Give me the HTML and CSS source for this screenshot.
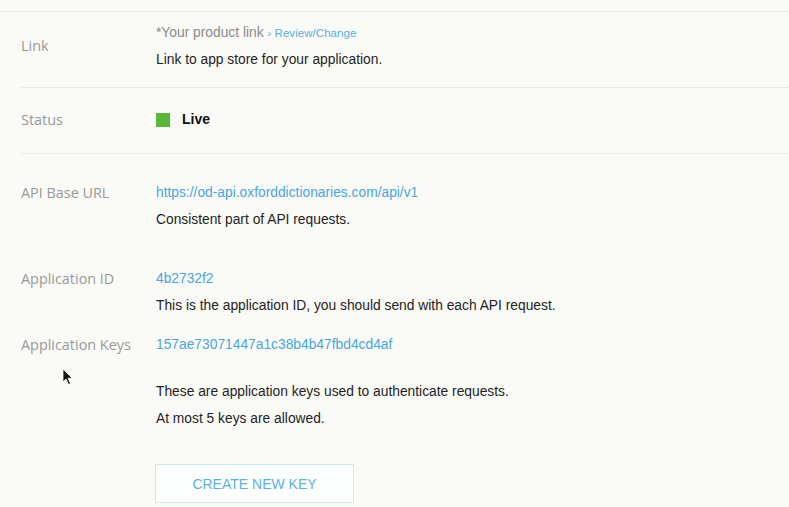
FILE: index.html
```html
<!DOCTYPE html>
<html>
<head>
<meta charset="utf-8">
<link rel="stylesheet" href="styles.css">
</head>
<body>
<div class="topline"></div>
<div class="section">
  <div class="row row-link bordered">
    <div class="label label-link">Link</div>
    <div class="value">
      <p class="muted">*Your product link <span class="review">› Review/Change</span></p>
      <p>Link to app store for your application.</p>
    </div>
  </div>
  <div class="row row-status bordered">
    <div class="label">Status</div>
    <div class="value status"><span class="dot"></span><b>Live</b></div>
  </div>
  <div class="row row-url">
    <div class="label">API Base URL</div>
    <div class="value">
      <p><a class="link">https://od-api.oxforddictionaries.com/api/v1</a></p>
      <p>Consistent part of API requests.</p>
    </div>
  </div>
  <div class="row row-id">
    <div class="label">Application ID</div>
    <div class="value">
      <p><a class="link">4b2732f2</a></p>
      <p>This is the application ID, you should send with each API request.</p>
    </div>
  </div>
  <div class="row row-keys">
    <div class="label">Application Keys</div>
    <div class="value">
      <p><a class="link">157ae73071447a1c38b4b47fbd4cd4af</a></p>
      <p class="gap">These are application keys used to authenticate requests.</p>
      <p>At most 5 keys are allowed.</p>
      <button class="btn">CREATE NEW KEY</button>
    </div>
  </div>
</div>
<svg class="cursor" width="12" height="18" viewBox="0 0 12 18"><path d="M1 1 L1 14 L4 11 L6.5 16.5 L8.5 15.6 L6 10.2 L10.2 10.2 Z" fill="#111" stroke="#fff" stroke-width="0.8"/></svg>
</body>
</html>
```
FILE: styles.css
```css
html, body {
  margin: 0;
  padding: 0;
  background: #fafaf7;
  overflow: hidden;
  height: 507px;
}
body {
  position: relative;
  font-family: "Liberation Sans", Arial, sans-serif;
  font-size: 13.8px;
  color: #1e1e1e;
}
p { margin: 0; line-height: 27px; }
.topline {
  height: 11px;
  border-bottom: 1px solid #ececE7;
}
.section {
  padding-left: 21px;
}
.row {
  display: grid;
  grid-template-columns: 135px 1fr;
  align-items: start;
}
.bordered {
  border-bottom: 1px solid #ececE7;
}
.label {
  font-family: "Open Sans", sans-serif;
  font-size: 14.4px;
  color: #999999;
  line-height: 27px;
}
.row-link { padding: 7px 0 14px; }
.label-link { margin-top: 13px; }
.muted { color: #8a8a8a; }
.review { color: #5aaee0; font-size: 11.6px; }
.row-status { padding: 18px 0 20px; }
.status {
  display: flex;
  align-items: center;
  gap: 12px;
  line-height: 27px;
  font-size: 14px;
}
.dot {
  width: 14px;
  height: 14px;
  background: #5db63c;
}
.status b { color: #111; }
.link { color: #4aa6dc; text-decoration: none; }
.row-url { padding-top: 25px; }
.row-id { padding-top: 32px; }
.row-keys { padding-top: 12px; }
.gap { margin-top: 20px; }
.btn {
  display: block;
  margin-top: 32px;
  width: 199px;
  height: 39px;
  margin-left: -1px;
  background: #fdfefe;
  border: 1px solid #c9eaf1;
  color: #5fb0e2;
  font-family: "Liberation Sans", Arial, sans-serif;
  font-size: 14px;
  padding: 0;
}
.cursor {
  position: absolute;
  left: 62px;
  top: 368px;
}
```
